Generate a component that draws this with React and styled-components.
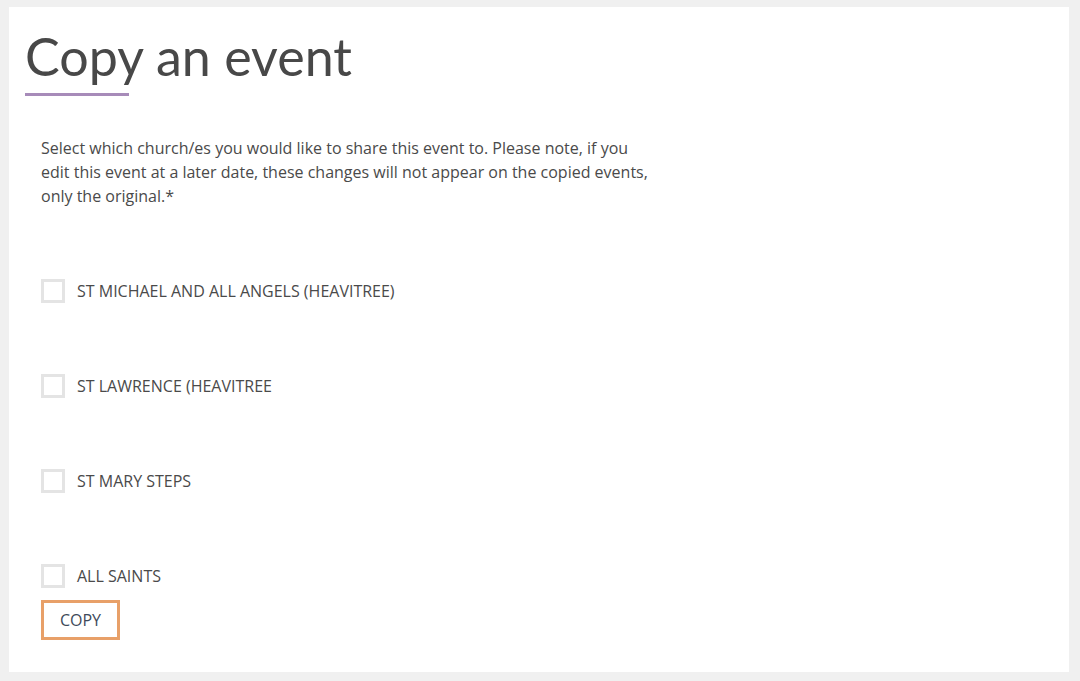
import React from "react";
import styled, { createGlobalStyle } from "styled-components";

const GlobalStyle = createGlobalStyle`
  body {
    margin: 0;
    background: #f0f0f0;
    font-family: "Open Sans", "Liberation Sans", sans-serif;
  }
`;

const Page = styled.div`
  padding: 7px 11px 9px 9px;
`;

const Card = styled.div`
  background: #ffffff;
  padding: 19px 16px 32px 16px;
  min-height: 613px;
  box-sizing: border-box;
`;

const Title = styled.h1`
  margin: 0;
  font-family: Lato, "Open Sans", sans-serif;
  font-weight: 400;
  font-size: 52px;
  line-height: 61px;
  color: #484848;
  letter-spacing: 0;
`;

const Underline = styled.div`
  width: 104px;
  height: 3px;
  background: #a78bb9;
  margin-top: 6px;
`;

const Form = styled.div`
  padding: 40px 16px 0;
`;

const Note = styled.p`
  margin: 0;
  max-width: 612px;
  font-size: 16px;
  line-height: 24px;
  color: #4a4a4a;
`;

const Row = styled.label`
  display: flex;
  align-items: center;
  gap: 12px;
  height: 24px;
  margin-top: 71px;
  font-size: 16px;
  color: #4a4a4a;
  text-transform: uppercase;
`;

const Box = styled.span`
  width: 24px;
  height: 24px;
  box-sizing: border-box;
  border: 3px solid #e4e4e4;
  background: #fff;
`;

const CopyButton = styled.button`
  margin-top: 12px;
  width: 79px;
  height: 40px;
  background: #fff;
  border: 3px solid #e8a068;
  font-family: "Open Sans", "Liberation Sans", sans-serif;
  font-size: 16px;
  color: #3e4a5a;
  text-transform: uppercase;
  padding: 0;
`;

const churches = [
  "St Michael and All Angels (Heavitree)",
  "St Lawrence (Heavitree",
  "St Mary Steps",
  "All Saints",
];

const App = () => {
  return (
    <Page>
      <GlobalStyle />
      <Card>
        <Title>Copy an event</Title>
        <Underline />
        <Form>
          <Note>
            Select which church/es you would like to share this event to.
            Please note, if you edit this event at a later date, these changes
            will not appear on the copied events, only the original.*
          </Note>
          {churches.map((name) => (
            <Row key={name}>
              <Box />
              {name}
            </Row>
          ))}
          <CopyButton>Copy</CopyButton>
        </Form>
      </Card>
    </Page>
  );
};

export default App;
